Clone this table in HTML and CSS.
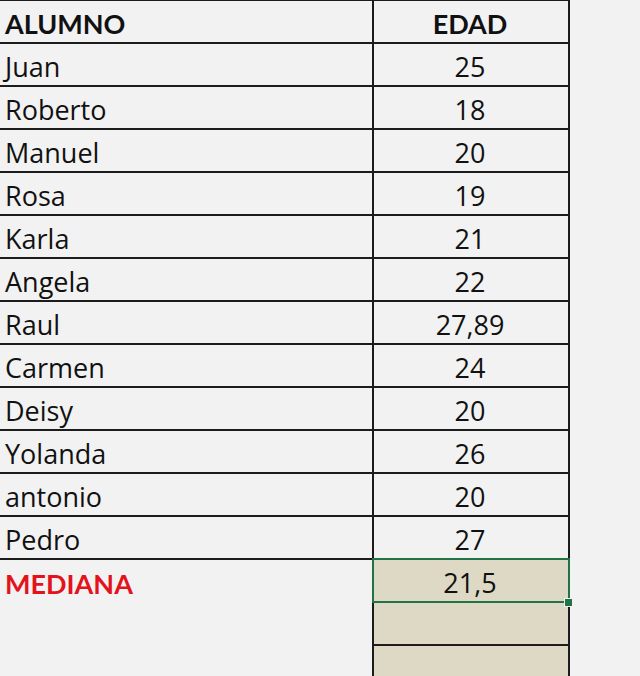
FILE: index.html
```html
<!DOCTYPE html>
<html lang="es">
<head>
<meta charset="utf-8">
<title>Mediana</title>
<link rel="stylesheet" href="styles.css">
</head>
<body>
<div class="sheet">
  <div class="cell name head">ALUMNO</div><div class="cell num head">EDAD</div>
  <div class="cell name">Juan</div><div class="cell num">25</div>
  <div class="cell name">Roberto</div><div class="cell num">18</div>
  <div class="cell name">Manuel</div><div class="cell num">20</div>
  <div class="cell name">Rosa</div><div class="cell num">19</div>
  <div class="cell name">Karla</div><div class="cell num">21</div>
  <div class="cell name">Angela</div><div class="cell num">22</div>
  <div class="cell name">Raul</div><div class="cell num">27,89</div>
  <div class="cell name">Carmen</div><div class="cell num">24</div>
  <div class="cell name">Deisy</div><div class="cell num">20</div>
  <div class="cell name">Yolanda</div><div class="cell num">26</div>
  <div class="cell name">antonio</div><div class="cell num">20</div>
  <div class="cell name">Pedro</div><div class="cell num">27</div>
  <div class="cell name label">MEDIANA</div><div class="cell num tan selected">21,5<span class="handle"></span></div>
  <div class="cell blank"></div><div class="cell num tan"></div>
  <div class="cell blank"></div><div class="cell num tan"></div>
</div>
</body>
</html>
```
FILE: styles.css
```css
html, body {
  margin: 0;
  padding: 0;
  background: #f2f2f2;
}
body {
  font-family: "Open Sans", "Lato", sans-serif;
  color: #111;
  overflow: hidden;
}
.sheet {
  display: grid;
  grid-template-columns: 374px 196px;
  grid-auto-rows: 43px;
  border-top: 1px solid #1c1c1c;
  width: 570px;
}
.cell {
  box-sizing: border-box;
  display: flex;
  align-items: center;
  font-size: 27px;
  padding-top: 4px;
  border-bottom: 2px solid #1c1c1c;
  border-right: 2px solid #1c1c1c;
}
.name {
  padding-left: 5px;
}
.num {
  justify-content: center;
  padding-right: 2px;
}
.head {
  font-family: "Lato", sans-serif;
  font-weight: 700;
  font-size: 27px;
  padding-top: 3px;
}
.label {
  font-family: "Lato", sans-serif;
  color: #e3131b;
  font-weight: 700;
  font-size: 27px;
  padding-top: 3px;
  border-bottom: none;
}
.blank {
  border-bottom: none;
}
.tan {
  background: #ddd9c4;
}
.selected {
  position: relative;
}
.selected::before {
  content: "";
  position: absolute;
  left: -2px;
  top: -2px;
  right: -2px;
  bottom: -2px;
  border: 2px solid #217346;
  pointer-events: none;
}
.handle {
  position: absolute;
  right: -5px;
  bottom: -6px;
  width: 7px;
  height: 7px;
  background: #217346;
  border: 1px solid #f2f2f2;
}
```
